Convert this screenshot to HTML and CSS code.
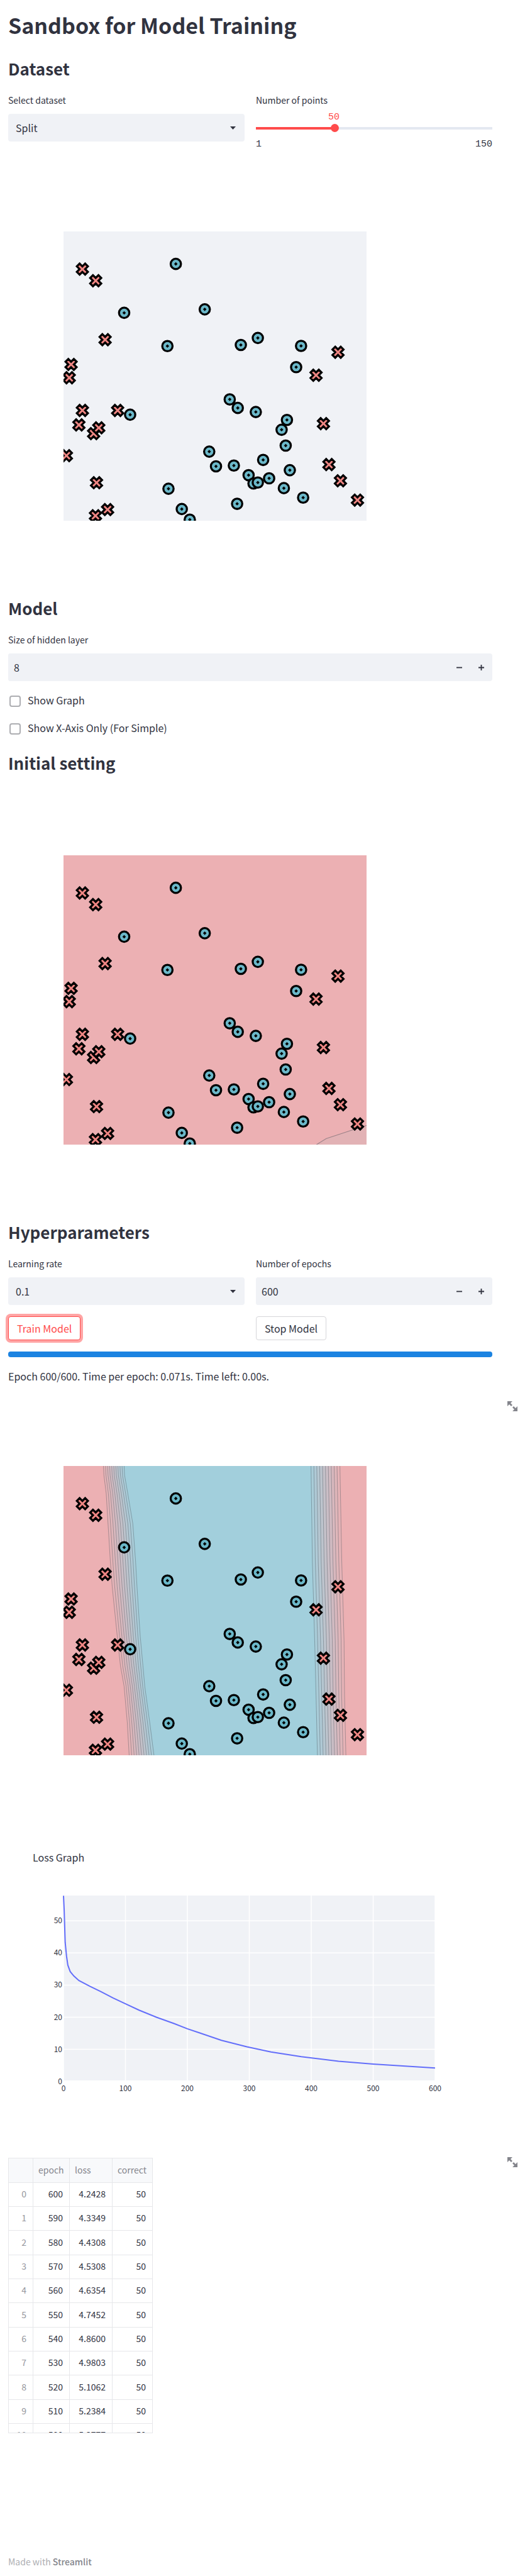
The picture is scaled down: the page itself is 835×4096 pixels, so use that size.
FILE: index.html
```html
<!DOCTYPE html>
<html lang="en">
<head>
<meta charset="utf-8">
<meta name="viewport" content="width=device-width, initial-scale=1">
<title>Sandbox for Model Training</title>
<link rel="stylesheet" href="styles.css">
</head>
<body>
<main class="page">
  <h1 class="title">Sandbox for Model Training</h1>

  <h2 class="heading">Dataset</h2>
  <div class="columns">
    <div class="field">
      <label class="label" for="dataset">Select dataset</label>
      <div class="select">
        <select class="control select-input" id="dataset"><option>Split</option></select>
        <svg class="select-arrow" viewBox="0 0 9 5" aria-hidden="true"><path d="M0 0h9L4.500 5z"/></svg>
      </div>
    </div>
    <div class="field">
      <label class="label" for="points">Number of points</label>
      <div class="slider">
        <output class="slider-value" for="points" style="margin-left:33%">50</output>
        <input class="slider-input" id="points" type="range" min="1" max="150" value="50">
        <div class="slider-ends"><span>1</span><span>150</span></div>
      </div>
    </div>
  </div>

  <figure class="figure">
    <svg class="scatter" viewBox="0 0 660 630" data-plot="plain" role="img" aria-label="Dataset"></svg>
  </figure>

  <h2 class="heading">Model</h2>
  <div class="field form-row">
    <label class="label" for="hidden">Size of hidden layer</label>
    <div class="stepper">
      <input class="control stepper-input" id="hidden" type="number" value="8">
      <button class="step" type="button" aria-label="Decrease hidden size"><svg viewBox="0 0 10 10"><path d="M0 5h10"/></svg></button>
      <button class="step" type="button" aria-label="Increase hidden size"><svg viewBox="0 0 10 10"><path d="M0 5h10M5 0v10"/></svg></button>
    </div>
  </div>
  <label class="check"><input class="check-box" type="checkbox">Show Graph</label>
  <label class="check"><input class="check-box" type="checkbox">Show X-Axis Only (For Simple)</label>

  <h2 class="heading heading-after-checks">Initial setting</h2>
  <figure class="figure figure-initial">
    <svg class="scatter" viewBox="0 0 660 630" data-plot="initial" role="img" aria-label="Initial setting"></svg>
  </figure>

  <h2 class="heading">Hyperparameters</h2>
  <div class="columns">
    <div class="field">
      <label class="label" for="rate">Learning rate</label>
      <div class="select">
        <select class="control select-input" id="rate"><option>0.1</option></select>
        <svg class="select-arrow" viewBox="0 0 9 5" aria-hidden="true"><path d="M0 0h9L4.500 5z"/></svg>
      </div>
    </div>
    <div class="field">
      <label class="label" for="epochs">Number of epochs</label>
      <div class="stepper">
        <input class="control stepper-input" id="epochs" type="number" value="600">
        <button class="step" type="button" aria-label="Decrease epochs"><svg viewBox="0 0 10 10"><path d="M0 5h10"/></svg></button>
        <button class="step" type="button" aria-label="Increase epochs"><svg viewBox="0 0 10 10"><path d="M0 5h10M5 0v10"/></svg></button>
      </div>
    </div>
  </div>
  <div class="columns actions">
    <div><button class="button button-focus" type="button">Train Model</button></div>
    <div><button class="button" type="button">Stop Model</button></div>
  </div>
  <div class="progress" role="progressbar" aria-valuenow="100" aria-label="Training progress"><div class="progress-fill" style="width:100%"></div></div>
  <p class="status">Epoch 600/600. Time per epoch: 0.071s. Time left: 0.00s.</p>

  <figure class="figure figure-trained">
    <button class="expand" type="button" aria-label="View chart fullscreen"><svg viewBox="0 0 8 8"><path d="M0 0v4l1.500-1.500 1.500 1.500 1-1-1.500-1.500 1.500-1.500zM5 4l-1 1 1.500 1.500-1.500 1.500h4v-4l-1.500 1.500z"/></svg></button>
    <svg class="scatter" viewBox="0 0 660 630" data-plot="trained" role="img" aria-label="Trained model"></svg>
  </figure>

  <figure class="loss">
    <figcaption class="loss-title">Loss Graph</figcaption>
    <svg class="loss-chart" viewBox="0 0 770 330" role="img" aria-label="Loss by epoch"></svg>
  </figure>

  <div class="table-area">
    <button class="expand" type="button" aria-label="View table fullscreen"><svg viewBox="0 0 8 8"><path d="M0 0v4l1.500-1.500 1.500 1.500 1-1-1.500-1.500 1.500-1.500zM5 4l-1 1 1.500 1.500-1.500 1.500h4v-4l-1.500 1.500z"/></svg></button>
    <div class="table-frame">
      <table class="table">
        <thead><tr><th class="col-index"></th><th class="col-epoch">epoch</th><th class="col-loss">loss</th><th class="col-correct">correct</th></tr></thead>
        <tbody>
          <tr><td>0</td><td>600</td><td>4.2428</td><td>50</td></tr>
          <tr><td>1</td><td>590</td><td>4.3349</td><td>50</td></tr>
          <tr><td>2</td><td>580</td><td>4.4308</td><td>50</td></tr>
          <tr><td>3</td><td>570</td><td>4.5308</td><td>50</td></tr>
          <tr><td>4</td><td>560</td><td>4.6354</td><td>50</td></tr>
          <tr><td>5</td><td>550</td><td>4.7452</td><td>50</td></tr>
          <tr><td>6</td><td>540</td><td>4.8600</td><td>50</td></tr>
          <tr><td>7</td><td>530</td><td>4.9803</td><td>50</td></tr>
          <tr><td>8</td><td>520</td><td>5.1062</td><td>50</td></tr>
          <tr><td>9</td><td>510</td><td>5.2384</td><td>50</td></tr>
          <tr><td>10</td><td>500</td><td>5.3777</td><td>50</td></tr>
        </tbody>
      </table>
    </div>
  </div>
</main>
<footer class="footer">Made with <a class="footer-link" href="#">Streamlit</a></footer>
<script src="charts.js"></script>
</body>
</html>
```

FILE: styles.css
```css
* { box-sizing: border-box; }

body {
  margin: 0;
  background: #fff;
  color: #31333f;
  font: 16px/26px "Noto Sans CJK SC", "Noto Sans", sans-serif;
}

h1, h2, p, figure { margin: 0; }

button, input, select { font: inherit; color: inherit; margin: 0; }

.page { padding: 18px 52px 0 13px; }

.title { font-size: 34px; line-height: 44px; font-weight: 700; margin-bottom: 30px; }

.heading { font-size: 26px; line-height: 34px; font-weight: 700; margin-bottom: 23px; }

.heading-after-checks { margin-top: 26px; }

.columns { display: grid; grid-template-columns: 1fr 1fr; column-gap: 18px; }

.label { display: block; font-size: 14px; line-height: 20px; margin-bottom: 12px; }

.control {
  height: 44px;
  border: 0;
  border-radius: 4px;
  background: #f0f2f6;
  outline: none;
}

.select { position: relative; }
.select-input { display: block; width: 100%; padding: 0 12px; appearance: none; }
.select-arrow { position: absolute; right: 14px; top: 20px; width: 9px; height: 5px; fill: #31333f; pointer-events: none; }

.slider-value {
  display: block;
  width: 40px;
  transform: translateX(-50%);
  text-align: center;
  color: #ff4b4b;
}
.slider-value, .slider-ends { font: 15px/16px "Liberation Mono", monospace; }
.slider { margin-top: -2px; }
.slider-input {
  display: block;
  width: 100%;
  height: 13px;
  margin: 2px 0 12px;
  appearance: none;
  background: linear-gradient(90deg, #ff4b4b 33%, #e4e8f1 33%) center / 100% 4px no-repeat;
}
.slider-input::-webkit-slider-thumb {
  appearance: none;
  width: 13px;
  height: 13px;
  border-radius: 50%;
  background: #ff4b4b;
}
.slider-ends { display: flex; justify-content: space-between; }

.figure { position: relative; padding: 130px 0 122px 88px; }
.figure-initial { padding-top: 107px; }
.scatter { display: block; width: 482px; height: auto; background: #f0f2f6; }

.stepper { display: flex; border-radius: 4px; background: #f0f2f6; }
.stepper-input { flex: 1; min-width: 0; padding: 0 9px; appearance: textfield; }
.stepper-input::-webkit-inner-spin-button { appearance: none; }
.step {
  display: flex;
  align-items: center;
  justify-content: center;
  width: 35px;
  height: 44px;
  padding: 0;
  border: 0;
  background: none;
}
.step svg { width: 9px; height: 9px; fill: none; stroke: #31333f; stroke-width: 2; }

.form-row { margin-bottom: 17px; }
.check { display: flex; gap: 11px; width: fit-content; margin-left: 2px; }
.check + .check { margin-top: 18px; }
.check-box {
  appearance: none;
  width: 18px;
  height: 18px;
  margin-top: 6px;
  border: 2px solid #adaeb2;
  border-radius: 4px;
  background: #fff;
}

.actions { margin: 18px 0; }
.button {
  display: block;
  height: 38px;
  padding: 0 13px;
  border: 1px solid #d6d6d9;
  border-radius: 4px;
  background: #fff;
  line-height: 34px;
}
.button-focus { border-color: #ff4b4b; color: #ff4b4b; box-shadow: 0 0 0 4px #ffa5a5; }

.progress { height: 9px; border-radius: 4px; background: #f0f2f6; overflow: hidden; }
.progress-fill { height: 100%; background: #1c83e1; }
.status { margin-top: 17px; }

.figure-trained { padding-bottom: 149px; }

.expand {
  position: absolute;
  top: 27px;
  right: -40px;
  width: 16px;
  height: 16px;
  padding: 0;
  border: 0;
  background: none;
}
.expand svg { display: block; fill: #84858c; }

.loss-title { padding-left: 39px; margin-bottom: 38px; }
.loss-chart { display: block; width: 100%; }
.loss-chart text { font-size: 12px; fill: #31333f; }

.table-area { position: relative; margin-top: 97px; }
.table-area .expand { top: -1px; }
.table-frame {
  width: 230px;
  height: 438px;
  border: 1px solid #e6e7ea;
  overflow: hidden;
}
.table { width: 100%; table-layout: fixed; border-collapse: separate; border-spacing: 0; font-size: 14px; line-height: 20px; }
.table th, .table td { padding: 0 10px 3px 8px; border: solid #e6e7ea; border-width: 0 1px 1px 0; text-align: right; }
.table th:last-child, .table td:last-child { border-right: 0; }
.table th { height: 39px; background: #f8f9fb; color: #84858c; font-weight: 400; text-align: left; }
.table td { height: 38px; }
.table tr:nth-child(3n) td { height: 39px; }
.table td:first-child { color: #95969d; }
.col-index { width: 39px; }
.col-epoch { width: 58px; }
.col-loss { width: 68px; }

.footer { padding: 194px 13px 14px; font-size: 14px; line-height: 20px; color: #adaeb2; }
.footer-link { color: #84858c; font-weight: 500; text-decoration: none; }
```

FILE: charts.js
```js
const NS = "http://www.w3.org/2000/svg";

function add(parent, tag, attrs, text) {
  const node = document.createElementNS(NS, tag);
  for (const key in attrs) node.setAttribute(key, attrs[key]);
  if (text !== undefined) node.textContent = text;
  parent.appendChild(node);
  return node;
}

const circles = [
  [244.6, 70.7], [132.1, 177.2], [307.6, 169.6], [226.3, 249.6], [386.2, 247.1],
  [423.2, 231.9], [517.4, 249.2], [506.7, 295.5], [362, 365.7], [379.5, 384.3],
  [418.8, 393.1], [145.1, 399], [486.6, 410.4], [475, 431.8], [483.9, 466.3],
  [317.4, 479.4], [332.1, 511.4], [371, 509.7], [434.8, 497.5], [403.1, 530.7],
  [492.9, 519.8], [413.8, 548.8], [423.2, 546.7], [447.8, 537.5], [479.9, 558.9],
  [521.9, 579.5], [228.6, 560.2], [257.6, 604.4], [275, 627.5], [378.1, 593]
];

const crosses = [
  [41.1, 82.1], [70.1, 107.3], [90.6, 235.7], [16.5, 289.6], [12.5, 318.6],
  [41.1, 389.7], [117.9, 389.7], [33.5, 421.3], [65.6, 440.2], [76.8, 427.6],
  [6.3, 488.2], [71.9, 547.1], [96, 605.6], [69.6, 619.1], [597.8, 263],
  [550, 313.1], [566.1, 418.4], [578.1, 507.6], [603.1, 542.9], [640.2, 585]
];

const crossPath = "m0 6 6 6 6-6-6-6 6-6-6-6-6 6-6-6-6 6 6 6-6 6 6 6z";

// Decision bands: outer and inner edge of each, as [y, left edge x, right edge x].
const leftBand = [
  [0, 87, 132], [20, 88, 133], [60, 93, 140], [126, 97, 151], [208, 102, 157], [262, 106, 160],
  [370, 117, 167], [435, 124, 173], [480, 132, 177], [560, 139, 188], [630, 143, 197]
];
const rightBand = [
  [0, 539, 602], [208, 542, 606], [380, 547, 611], [500, 550, 612], [630, 553, 615]
];

const red = [236, 176, 179];
const blue = [162, 207, 220];
const LEVELS = 10;

function mix(a, b, t) {
  return "rgb(" + a.map((v, i) => Math.round(v + (b[i] - v) * t)) + ")";
}

function drawBand(svg, band, from, to) {
  for (let i = 0; i <= LEVELS; i++) {
    const line = band.map(([y, l, r]) => (l + (r - l) * i / LEVELS) + "," + y).join(" ");
    add(svg, "polygon", { points: line + " 660,630 660,0", fill: mix(from, to, (i + 1) / (LEVELS + 1)) });
    add(svg, "polyline", { points: line, fill: "none", stroke: "#3c4650", "stroke-opacity": 0.5 });
  }
}

document.querySelectorAll(".scatter").forEach(svg => {
  const kind = svg.dataset.plot;
  if (kind !== "plain") add(svg, "rect", { width: 660, height: 630, fill: mix(red, blue, 0) });
  if (kind === "initial") {
    add(svg, "path", { d: "M551 630l21-13 57-19 31-10v42z", fill: "#e2b2b5" });
    add(svg, "path", { d: "M551 630l21-13 57-19 31-10", fill: "none", stroke: "#9c8288", "stroke-width": 1.5 });
  }
  if (kind === "trained") {
    drawBand(svg, leftBand, red, blue);
    drawBand(svg, rightBand, blue, red);
  }
  circles.forEach(([x, y]) => {
    const g = add(svg, "g", { transform: `translate(${x} ${y})` });
    add(g, "circle", { r: 11.2, fill: "#6bb8c9", stroke: "#000", "stroke-width": 4.5 });
    add(g, "path", { d: "M0-3.800 3.800 0 0 3.800-3.800 0z" });
  });
  crosses.forEach(([x, y]) => {
    add(svg, "path", { d: crossPath, transform: `translate(${x} ${y})`, fill: "#ef8683", stroke: "#000", "stroke-width": 4.5 });
  });
});

const losses = [
  [0, 57.8], [1.1, 53.2], [2.7, 43.3], [4.9, 39], [7, 36.2], [10.8, 34.2], [16.8, 32.8],
  [24.9, 31.4], [42.7, 29.6], [60, 28], [80, 26], [100, 24.2], [122, 22.2], [150, 20],
  [179, 18], [200, 16.4], [220, 15.1], [255, 12.8], [296, 10.8], [335, 9.2],
  [384, 7.7], [444, 6.3], [500, 5.4], [600, 4.2]
];

const loss = document.querySelector(".loss-chart");
const px = epoch => 88 + epoch * 0.985;
const py = value => 305.7 - value * 5.11;

add(loss, "rect", { x: 88, y: 10, width: 591, height: 294, fill: "#f0f2f6" });
for (let e = 0; e <= 600; e += 100) {
  add(loss, "path", { d: `M${px(e)} 10v294`, stroke: "#fff", "stroke-width": 1.5 });
  add(loss, "text", { x: px(e), y: 321, "text-anchor": "middle" }, e);
}
for (let v = 0; v <= 50; v += 10) {
  add(loss, "path", { d: `M88 ${py(v)}h591`, stroke: "#fff", "stroke-width": 1.5 });
  add(loss, "text", { x: 86, y: py(v) + 4, "text-anchor": "end" }, v);
}
add(loss, "polyline", {
  points: losses.map(([e, v]) => px(e) + "," + py(v)).join(" "),
  fill: "none", stroke: "#636efa", "stroke-width": 2
});
```
